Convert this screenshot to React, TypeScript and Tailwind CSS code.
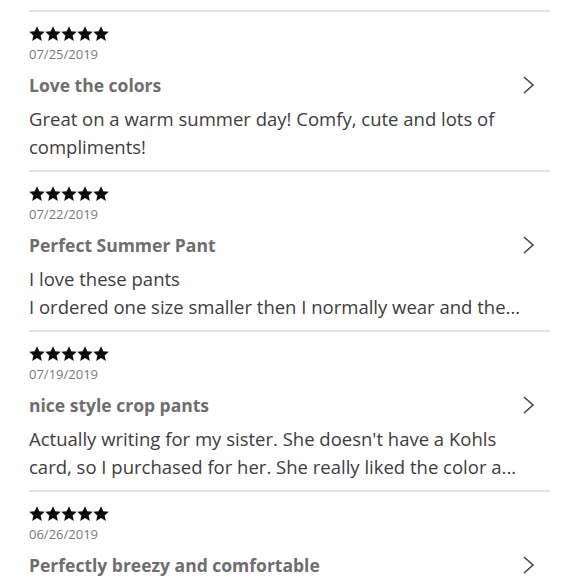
import React from "react";

type Review = { date: string; title: string; lines: string[] };

const reviews: Review[] = [
  {
    date: "07/25/2019",
    title: "Love the colors",
    lines: ["Great on a warm summer day! Comfy, cute and lots of", "compliments!"],
  },
  {
    date: "07/22/2019",
    title: "Perfect Summer Pant",
    lines: ["I love these pants", "I ordered one size smaller then I normally wear and the..."],
  },
  {
    date: "07/19/2019",
    title: "nice style crop pants",
    lines: [
      "Actually writing for my sister. She doesn't have a Kohls",
      "card, so I purchased for her. She really liked the color a...",
    ],
  },
  {
    date: "06/26/2019",
    title: "Perfectly breezy and comfortable",
    lines: [],
  },
];

function Star() {
  return (
    <svg width="16" height="16" viewBox="0 0 24 24" aria-hidden="true">
      <path
        d="M12 0.3l3.4 7.6 8.3.8-6.3 5.5 1.9 8.2L12 18.1l-7.3 4.3 1.9-8.2L0.3 8.7l8.3-.8z"
        fill="#0a0a0a"
      />
    </svg>
  );
}

function Chevron() {
  return (
    <svg width="14" height="20" viewBox="0 0 14 20" aria-hidden="true">
      <path d="M2 2l9 8-9 8" fill="none" stroke="#444" strokeWidth="1.6" />
    </svg>
  );
}

export default function App() {
  return (
    <div
      className="w-[579px] h-[580px] overflow-hidden bg-white pt-[10px] px-[29px]"
      style={{ fontFamily: '"Open Sans", Arial, sans-serif' }}
    >
      {reviews.map((r, i) => (
        <div key={i} className="border-t-2 border-[#e4e4e4] pt-[14px] pb-[9px]">
          <div className="flex h-[16px]">
            {[0, 1, 2, 3, 4].map((s) => (
              <Star key={s} />
            ))}
          </div>
          <div className="mt-[2px] text-[13px] leading-[20px] text-[#7a7a7a]">{r.date}</div>
          <div className="mt-[9px] flex items-center justify-between pr-[14px] h-[24px]">
            <div className="text-[17.5px] leading-[24px] font-bold text-[#6e6e6e]">{r.title}</div>
            <Chevron />
          </div>
          {r.lines.length > 0 && (
            <div className="mt-[8px] text-[18.5px] leading-[28px] text-[#3d3d3d]">
              {r.lines.map((l, j) => (
                <div key={j} className="whitespace-nowrap">
                  {l}
                </div>
              ))}
            </div>
          )}
        </div>
      ))}
    </div>
  );
}
